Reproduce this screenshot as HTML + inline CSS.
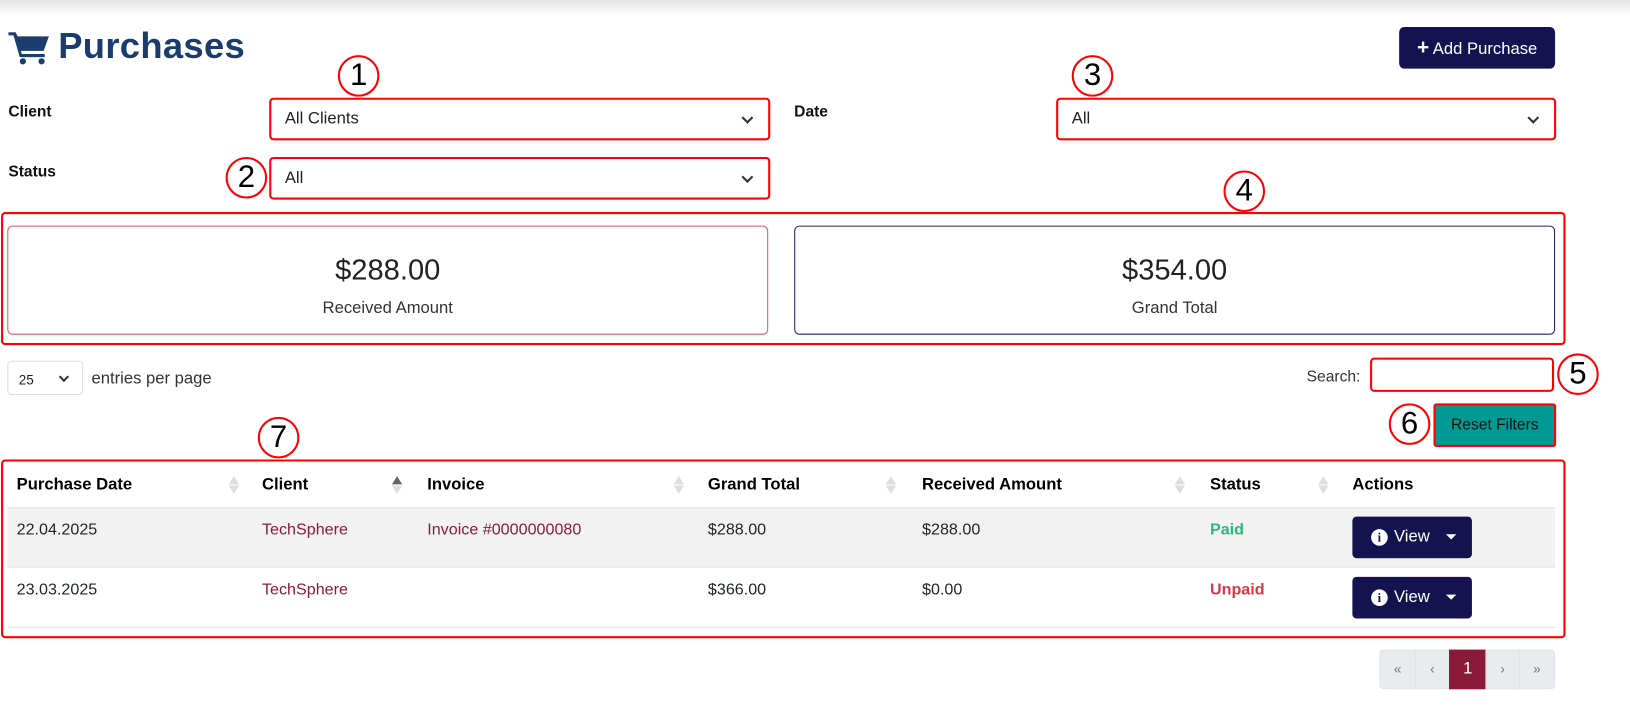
<!DOCTYPE html>
<html><head><meta charset="utf-8"><style>
*{box-sizing:border-box;margin:0;padding:0}
body{width:1630px;height:712px;position:relative;background:#fff;font-family:"Liberation Sans",sans-serif;color:#212529;overflow:hidden}
#w{position:absolute;left:0;top:0;width:1568px;height:685px;transform:scale(1.0395);transform-origin:0 0}
.a{position:absolute}
.top{left:0;top:0;width:1630px;height:16px;background:linear-gradient(#e4e4e4,#fff)}
.lbl{font-weight:bold;font-size:15px;color:#111}
.sel{border:2px solid #f00;border-radius:4px;font-size:16px;padding-left:13px;display:flex;align-items:center;color:#222}
.chev{position:absolute;right:16px;top:50%;width:8px;height:8px;border-right:2px solid #333;border-bottom:2px solid #333;transform:translateY(-70%) rotate(45deg)}
.circ{width:40px;height:40px;border:2px solid #f00;border-radius:50%;text-align:center;font-size:30px;line-height:36px;color:#000}
.card{border-radius:5px;text-align:center}
.amt{font-size:28px;margin-top:26px;color:#222}
.sub{font-size:16px;margin-top:12px;color:#333}
.th{font-weight:bold;font-size:16px;color:#000;top:458px}
.td{font-size:15.5px;top:501px}
.r2{top:559px}
.link{color:#8b1a3a}
.sort{width:10px;height:18px;top:458px}
.sort:before,.sort:after{content:"";position:absolute;left:0;border-left:5px solid transparent;border-right:5px solid transparent}
.sort:before{top:0;border-bottom:8px solid #ddd}
.sort:after{top:9px;border-top:8px solid #ddd}
.sort.up:before{border-bottom-color:#666}
.view{width:115px;height:40px;background:#14134f;border-radius:4px;color:#fff;font-size:16px}
.view .i{position:absolute;left:18px;top:12px;width:16px;height:16px;border-radius:50%;background:#fff;color:#14134f;font-size:12px;font-weight:bold;text-align:center;line-height:16px;font-family:"Liberation Serif",serif}
.view .t{position:absolute;left:40px;top:11px}
.view .c{position:absolute;right:15px;top:17px;border-left:5px solid transparent;border-right:5px solid transparent;border-top:5px solid #fff}
.pg{top:625px;height:38px;background:#e9ecef;border:1px solid #dee2e6;color:#6c757d;font-size:13px;text-align:center;line-height:36px}
</style></head><body>
<div class="a top"></div>
<div id="w">
<svg class="a" style="left:8px;top:29px" width="40" height="34" viewBox="0 0 40 34"><path d="M0 2h7l2 4h30l-5 14H12l1 3h22v3H11L5 5H0z" fill="#1a3d6e"/><circle cx="14" cy="30" r="3" fill="#1a3d6e"/><circle cx="32" cy="30" r="3" fill="#1a3d6e"/></svg>
<div class="a" style="left:56px;top:25px;font-size:35px;font-weight:bold;color:#1a3d6e;letter-spacing:0.3px">Purchases</div>
<div class="a" style="left:1346px;top:26px;width:150px;height:40px;background:#14134f;border-radius:5px;color:#fff;font-size:16px;line-height:40px;text-align:center"><b style="font-size:20px">+</b> Add Purchase</div>

<div class="a lbl" style="left:8px;top:99px">Client</div>
<div class="a lbl" style="left:764px;top:99px">Date</div>
<div class="a lbl" style="left:8px;top:157px">Status</div>
<div class="a sel" style="left:259px;top:94px;width:482px;height:41px">All Clients<span class="chev"></span></div>
<div class="a sel" style="left:1016px;top:94px;width:481px;height:41px">All<span class="chev"></span></div>
<div class="a sel" style="left:259px;top:151px;width:482px;height:41px">All<span class="chev"></span></div>
<div class="a circ" style="left:325px;top:53px">1</div>
<div class="a circ" style="left:217px;top:151px">2</div>
<div class="a circ" style="left:1031px;top:53px">3</div>
<div class="a circ" style="left:1177px;top:164px">4</div>
<div class="a circ" style="left:1498px;top:340px">5</div>
<div class="a circ" style="left:1336px;top:388px">6</div>
<div class="a circ" style="left:248px;top:401px">7</div>

<div class="a" style="left:1px;top:204px;width:1505px;height:128px;border:2px solid #f00;border-radius:4px"></div>
<div class="a card" style="left:7px;top:217px;width:732px;height:105px;border:1px solid #e0556a"><div class="amt">$288.00</div><div class="sub">Received Amount</div></div>
<div class="a card" style="left:764px;top:217px;width:732px;height:105px;border:1px solid #1f2060"><div class="amt">$354.00</div><div class="sub">Grand Total</div></div>

<div class="a" style="left:7px;top:347px;width:73px;height:33px;border:1px solid #ddd;border-radius:4px;font-size:13px;padding:10px 0 0 10px">25<span class="chev" style="right:14px;width:7px;height:7px"></span></div>
<div class="a" style="left:88px;top:356px;font-size:16px;color:#333">entries per page</div>
<div class="a" style="left:1257px;top:354px;font-size:15px;color:#333">Search:</div>
<div class="a" style="left:1318px;top:344px;width:177px;height:33px;border:2px solid #f00;border-radius:4px"></div>
<div class="a" style="left:1379px;top:388px;width:118px;height:42px;border:2px solid #f00;border-radius:3px;background:#009a93;font-size:15px;line-height:38px;text-align:center;color:#111">Reset Filters</div>

<div class="a" style="left:1px;top:442px;width:1505px;height:172px;border:2px solid #f00;border-radius:4px"></div>
<div class="a" style="left:7px;top:488px;width:1489px;height:58px;background:#f2f2f2;border-top:1px solid #dee2e6;border-bottom:1px solid #dee2e6"></div>
<div class="a" style="left:7px;top:603px;width:1489px;height:1px;background:#dee2e6"></div>

<div class="a th" style="left:16px">Purchase Date</div>
<div class="a th" style="left:252px">Client</div>
<div class="a th" style="left:411px">Invoice</div>
<div class="a th" style="left:681px">Grand Total</div>
<div class="a th" style="left:887px">Received Amount</div>
<div class="a th" style="left:1164px">Status</div>
<div class="a th" style="left:1301px">Actions</div>
<div class="a sort" style="left:220px"></div>
<div class="a sort up" style="left:377px"></div>
<div class="a sort" style="left:648px"></div>
<div class="a sort" style="left:852px"></div>
<div class="a sort" style="left:1130px"></div>
<div class="a sort" style="left:1268px"></div>

<div class="a td" style="left:16px">22.04.2025</div>
<div class="a td link" style="left:252px">TechSphere</div>
<div class="a td link" style="left:411px">Invoice #0000000080</div>
<div class="a td" style="left:681px">$288.00</div>
<div class="a td" style="left:887px">$288.00</div>
<div class="a td" style="left:1164px;font-weight:bold;color:#2cb67d">Paid</div>
<div class="a td r2" style="left:16px">23.03.2025</div>
<div class="a td r2 link" style="left:252px">TechSphere</div>
<div class="a td r2" style="left:681px">$366.00</div>
<div class="a td r2" style="left:887px">$0.00</div>
<div class="a td r2" style="left:1164px;font-weight:bold;color:#dc3545">Unpaid</div>
<div class="a view" style="left:1301px;top:497px"><span class="i">i</span><span class="t">View</span><span class="c"></span></div>
<div class="a view" style="left:1301px;top:555px"><span class="i">i</span><span class="t">View</span><span class="c"></span></div>

<div class="a pg" style="left:1327px;width:35px;border-radius:4px 0 0 4px">«</div>
<div class="a pg" style="left:1361px;width:34px">‹</div>
<div class="a pg" style="left:1394px;width:36px;background:#8b1a3a;border-color:#8b1a3a;color:#fff;font-size:16px">1</div>
<div class="a pg" style="left:1429px;width:33px">›</div>
<div class="a pg" style="left:1461px;width:35px;border-radius:0 4px 4px 0">»</div>
</div>
</body></html>
